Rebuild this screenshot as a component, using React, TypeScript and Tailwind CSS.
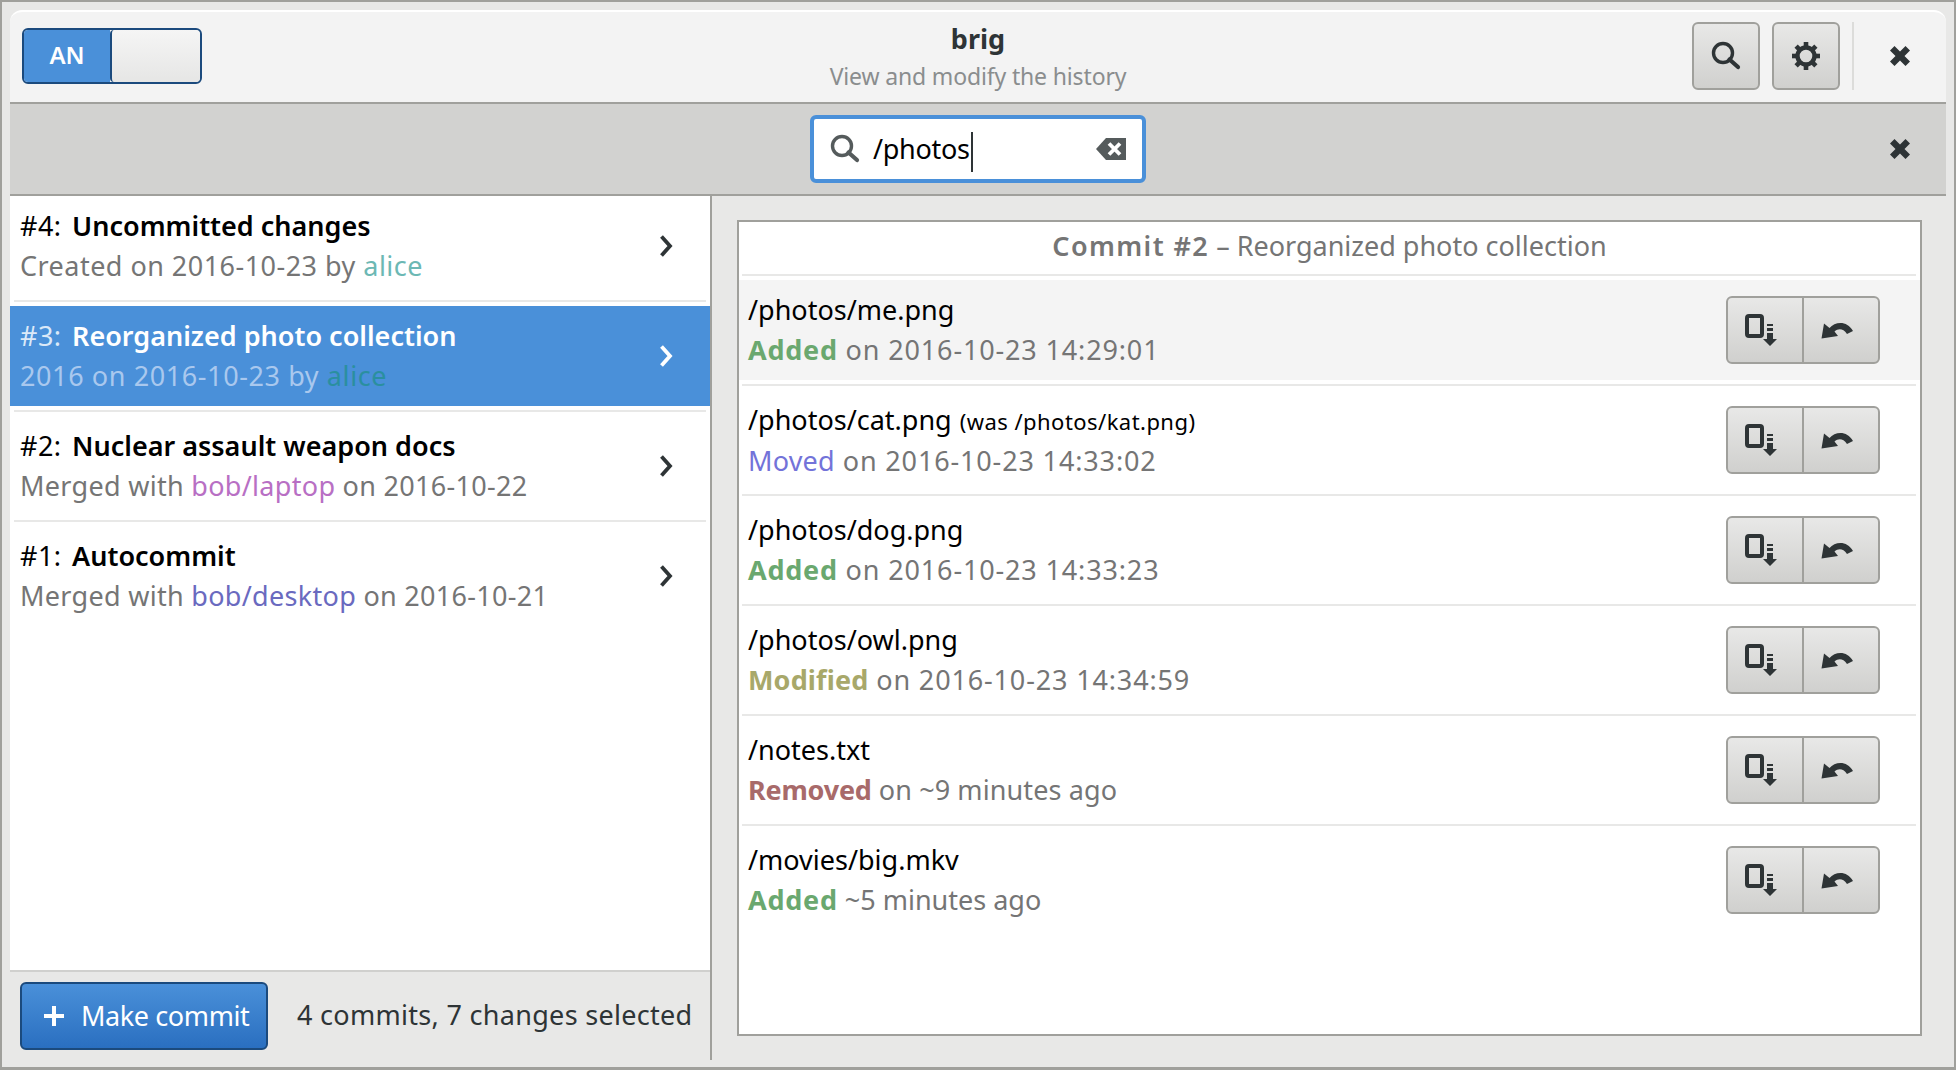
const fontStack = { fontFamily: '"Noto Sans", sans-serif' };

type Commit = {
    id: number;
    title: string;
    before: string;
    link: string;
    linkClass: string;
    after: string;
    subClass: string;
    selected?: boolean;
};

const commits: Commit[] = [
    { id: 4, title: 'Uncommitted changes', before: 'Created on 2016-10-23 by ', link: 'alice', linkClass: 'text-[#6cb8b4]', after: '', subClass: 'tracking-[0.47px]' },
    { id: 3, title: 'Reorganized photo collection', before: '2016 on 2016-10-23 by ', link: 'alice', linkClass: 'text-[#2a8f9f]', after: '', subClass: 'tracking-[0.6px]', selected: true },
    { id: 2, title: 'Nuclear assault weapon docs', before: 'Merged with ', link: 'bob/laptop', linkClass: 'text-[#b86fc4]', after: ' on 2016-10-22', subClass: 'tracking-[0.3px]' },
    { id: 1, title: 'Autocommit', before: 'Merged with ', link: 'bob/desktop', linkClass: 'text-[#6a6abf]', after: ' on 2016-10-21', subClass: 'tracking-[0.3px]' },
];

const changes = [
    { path: '/photos/me.png', was: '', kind: 'Added', kindClass: 'text-[#6aa86f] font-bold tracking-[0.75px]', rest: ' on 2016-10-23 14:29:01', restClass: 'tracking-[0.85px]', hover: true },
    { path: '/photos/cat.png', was: '(was /photos/kat.png)', kind: 'Moved', kindClass: 'text-[#7373d9] tracking-[0.2px]', rest: ' on 2016-10-23 14:33:02', restClass: 'tracking-[0.85px]' },
    { path: '/photos/dog.png', was: '', kind: 'Added', kindClass: 'text-[#6aa86f] font-bold tracking-[0.75px]', rest: ' on 2016-10-23 14:33:23', restClass: 'tracking-[0.85px]' },
    { path: '/photos/owl.png', was: '', kind: 'Modified', kindClass: 'text-[#a8a86a] font-bold tracking-[0.15px]', rest: ' on 2016-10-23 14:34:59', restClass: 'tracking-[0.85px]' },
    { path: '/notes.txt', was: '', kind: 'Removed', kindClass: 'text-[#a86a6a] font-bold tracking-[-0.2px]', rest: ' on ~9 minutes ago', restClass: 'tracking-[0.1px]' },
    { path: '/movies/big.mkv', was: '', kind: 'Added', kindClass: 'text-[#6aa86f] font-bold tracking-[0.75px]', rest: ' ~5 minutes ago', restClass: 'tracking-normal' },
];

function CloseIcon() {
    return (
        <svg width="20" height="20" viewBox="0 0 20 20" fill="#2e3436">
            <path d="M0 4.5 L4.5 0 L10 5.5 L15.5 0 L20 4.5 L14.5 10 L20 15.5 L15.5 20 L10 14.5 L4.5 20 L0 15.5 L5.5 10 Z" />
        </svg>
    );
}

function SearchIcon({ color = '#2e3436' }: { color?: string }) {
    return (
        <svg width="30" height="30" viewBox="0 0 30 30" fill="none" stroke={color}>
            <circle cx="12" cy="12" r="9.5" strokeWidth="3.4" />
            <path d="M18.5 18.5 L27 26" strokeWidth="4.2" strokeLinecap="round" />
        </svg>
    );
}

function GearIcon() {
    const teeth = [0, 45, 90, 135, 180, 225, 270, 315];
    return (
        <svg width="30" height="30" viewBox="0 0 30 30" fill="none">
            {teeth.map((a) => (
                <rect key={a} x="12.7" y="1" width="4.6" height="6" fill="#2e3436" transform={`rotate(${a} 15 15)`} />
            ))}
            <circle cx="15" cy="15" r="8.5" stroke="#2e3436" strokeWidth="4.4" />
        </svg>
    );
}

function ClearIcon() {
    return (
        <svg width="30" height="22" viewBox="0 0 30 22">
            <path d="M0 11 L10 0 H30 V22 H10 Z" fill="#555b5c" />
            <path d="M13 5.5 L24 16.5 M24 5.5 L13 16.5" stroke="#fff" strokeWidth="3.8" />
        </svg>
    );
}

function Chevron({ color }: { color: string }) {
    return (
        <svg width="16" height="24" viewBox="0 0 16 24" fill="none">
            <path d="M3.5 2.5 L12 12 L3.5 21.5" stroke={color} strokeWidth="3.8" />
        </svg>
    );
}

function FileDownIcon() {
    return (
        <svg width="32" height="34" viewBox="0 0 32 34">
            <rect x="2" y="2" width="15" height="20" rx="2" fill="none" stroke="#2e3436" strokeWidth="4" />
            <path d="M22 10 H28 V12 H22 Z M22 14 H28 V17 H22 Z M22 19 H28 V25 H32 L25 32 L18 25 H22 Z" fill="#2e3436" />
        </svg>
    );
}

function UndoIcon() {
    return (
        <svg width="32" height="18" viewBox="0 0 32 18">
            <path d="M0.5 17.5 L3 2.5 L8.5 7 C 14 0.5 26 -1 32 10 L26 13 C 22 7 17 7.5 13.5 10.5 L17 15 Z" fill="#2e3436" />
        </svg>
    );
}

function Separator({ className }: { className: string }) {
    return <div className={`h-[2px] bg-[#e8e8e7] ${className}`} />;
}

function ActionButtons() {
    return (
        <div className="flex h-[68px] w-[154px] rounded-[6px] border-2 border-[#a0a09c] bg-gradient-to-b from-[#e8e8e7] to-[#d0d0ce]">
            <button className="flex flex-1 items-center justify-center pr-[9px] pt-[1px]">
                <FileDownIcon />
            </button>
            <div className="w-[2px] bg-[#a0a09c]" />
            <button className="flex w-[74px] items-center justify-center pr-[9px]">
                <UndoIcon />
            </button>
        </div>
    );
}

function CommitRow({ commit }: { commit: Commit }) {
    return (
        <div className={`flex h-[100px] items-center pl-[10px] pr-9 ${commit.selected ? 'bg-[#4a90d9]' : ''}`}>
            <div className="flex-1 text-[27px] leading-[40px] tracking-[0.47px]">
                <div className={commit.selected ? 'text-white' : 'text-black'}>
                    <span className={commit.selected ? 'text-[#dbe9f8]' : ''}>#{commit.id}: </span>
                    <span className="ml-[3px] font-semibold tracking-normal">{commit.title}</span>
                </div>
                <div className={`${commit.subClass} ${commit.selected ? 'text-[#a9c8ee]' : 'text-[#757575]'}`}>
                    {commit.before}
                    <span className={commit.linkClass}>{commit.link}</span>
                    {commit.after}
                </div>
            </div>
            <Chevron color={commit.selected ? '#ffffff' : '#2e3436'} />
        </div>
    );
}

export default function App() {
    return (
        <div style={fontStack} className="flex h-[1070px] w-[1956px] flex-col overflow-hidden border-x-2 border-t-2 border-b-[3px] border-[#a0a09c] bg-[#e8e8e7] px-2 pt-2 pb-[7px]">
            {/* Header */}
            <header className="grid h-[94px] shrink-0 grid-cols-[1fr_auto_1fr] items-center rounded-t-[12px] border-t-2 border-b-2 border-t-white border-b-[#a0a09c] bg-[#f3f3f3] pb-[2px]">
                <div className="ml-3 flex h-[56px] w-[180px] overflow-hidden rounded-[6px] border-2 border-[#1b4a7d]">
                    <div className="flex w-[86px] items-center justify-center bg-[#4a90d9] pb-[2px] text-[24px] font-semibold text-white">AN</div>
                    <div className="flex-1 rounded-[4px] border-l-2 border-[#1b4a7d] bg-gradient-to-b from-[#f5f5f5] to-[#e6e6e5]" />
                </div>
                <div className="text-center">
                    <div className="pt-[1px] text-[27px] font-bold leading-[38px] text-[#2e3436]">brig</div>
                    <div className="text-[23px] leading-[36px] tracking-[-0.15px] text-[#8a8d8e]">View and modify the history</div>
                </div>
                <div className="flex items-center justify-end">
                    <button className="flex h-[68px] w-[68px] items-center justify-center rounded-[6px] border-2 border-[#a0a09c] bg-gradient-to-b from-[#e8e8e7] to-[#d0d0ce]">
                        <SearchIcon />
                    </button>
                    <button className="ml-3 flex h-[68px] w-[68px] items-center justify-center rounded-[6px] border-2 border-[#a0a09c] bg-gradient-to-b from-[#e8e8e7] to-[#d0d0ce]">
                        <GearIcon />
                    </button>
                    <div className="ml-3 h-[68px] w-[2px] bg-[#dcdcda]" />
                    <div className="flex w-[92px] justify-center"><CloseIcon /></div>
                </div>
            </header>

            {/* Search bar */}
            <div className="grid h-[92px] shrink-0 grid-cols-[1fr_336px_1fr] items-center border-b-2 border-[#a0a09c] bg-[#d2d2d0]">
                <div />
                <div className="flex h-[68px] items-center rounded-[6px] border-4 border-[#4a90d9] bg-white pl-4 pr-4">
                    <SearchIcon color="#555b5c" />
                    <span className="ml-[13px] mt-[3px] flex-1 text-[27px] leading-[40px] tracking-[-0.3px] text-black">
                        /photos<span className="ml-[1px] inline-block h-[40px] w-[2px] bg-[#2e3436] align-middle" />
                    </span>
                    <ClearIcon />
                </div>
                <div className="flex justify-end pr-[36px]"><CloseIcon /></div>
            </div>

            <main className="flex min-h-0 flex-1">
                {/* Commit list */}
                <aside className="flex w-[702px] shrink-0 flex-col border-r-2 border-[#a0a09c]">
                    <div className="flex-1 bg-white">
                        {commits.map((commit, i) => (
                            <div key={commit.id}>
                                <CommitRow commit={commit} />
                                {i < commits.length - 1 && <Separator className="mx-1 my-1" />}
                            </div>
                        ))}
                    </div>
                    <footer className="flex h-[90px] shrink-0 items-start border-t-2 border-[#d0d0ce] pl-[10px] pt-[10px]">
                        <button className="flex h-[68px] w-[248px] items-center justify-start rounded-[6px] border-2 border-[#1b4a7d] bg-gradient-to-b from-[#4a90d9] to-[#2a6fc0] pl-[22px] text-[27px] tracking-[-0.4px] text-white">
                            <svg width="20" height="20" viewBox="0 0 20 20" className="mr-[17px]" fill="#fff">
                                <path d="M8 0 H12 V8 H20 V12 H12 V20 H8 V12 H0 V8 H8 Z" />
                            </svg>
                            Make commit
                        </button>
                        <span className="ml-[29px] mt-[13px] text-[27px] leading-[40px] tracking-[0.3px] text-[#2e3436]">4 commits, 7 changes selected</span>
                    </footer>
                </aside>

                {/* Commit details */}
                <section className="flex min-w-0 flex-1 py-6 pl-[25px] pr-[24px]">
                    <div className="flex-1 border-2 border-[#a0a09c] bg-white">
                        <div className="flex h-[52px] items-center justify-center pb-[3px] text-[27px] text-[#757575]">
                            <span className="font-semibold tracking-[1.4px]">Commit #2</span>
                            <span className="whitespace-pre"> – Reorganized photo collection</span>
                        </div>
                        <Separator className="ml-[3px] mr-1" />
                        {changes.map((change, i) => (
                            <div key={change.path}>
                                <div className={`mt-1 flex h-[100px] items-center pl-[9px] pr-10 ${change.hover ? 'bg-[#f4f4f4]' : ''}`}>
                                    <div className="flex-1 text-[27px] leading-[40px]">
                                        <div className="text-black">
                                            {change.path}
                                            {change.was && <span className="ml-2 text-[22px] tracking-[0.45px]">{change.was}</span>}
                                        </div>
                                        <div className="whitespace-pre text-[#757575]">
                                            <span className={change.kindClass}>{change.kind}</span>
                                            <span className={change.restClass}>{change.rest}</span>
                                        </div>
                                    </div>
                                    <ActionButtons />
                                </div>
                                {i < changes.length - 1 && <Separator className="ml-[3px] mr-1 mt-1" />}
                            </div>
                        ))}
                    </div>
                </section>
            </main>
        </div>
    );
}
